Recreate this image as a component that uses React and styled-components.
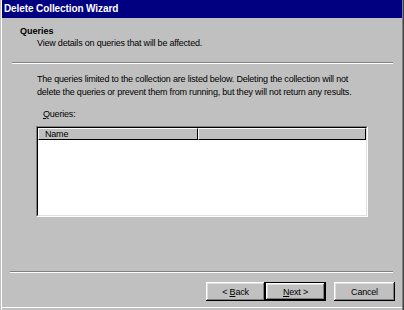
import styled, { createGlobalStyle } from "styled-components";

const GlobalStyle = createGlobalStyle`
  html, body {
    margin: 0;
    padding: 0;
    background: #c0c0c0;
  }
  body {
    font-family: "Liberation Sans", Arial, sans-serif;
    color: #000;
  }
`;

const Window = styled.div`
  width: 404px;
  height: 310px;
  box-sizing: border-box;
  padding: 0 2px 3px 2px;
  background: #c0c0c0;
  display: flex;
  flex-direction: column;
  box-shadow: inset 1px 0 0 #c0c0c0, inset 2px 0 0 #fff,
    inset -1px 0 0 #404040, inset -2px 0 0 #808080,
    inset 0 -2px 0 #c0c0c0, inset 0 -3px 0 #fff;
`;

const TitleBar = styled.div`
  height: 18px;
  background: #000080;
  color: #fff;
  font-weight: bold;
  font-size: 10px;
  letter-spacing: -0.1px;
  line-height: 18px;
  padding-left: 2px;
`;

const Header = styled.div`
  padding: 8px 0 0 18px;
  height: 36px;
  font-size: 9px;
`;

const HeaderTitle = styled.div`
  font-weight: bold;
  line-height: 11px;
`;

const HeaderSub = styled.div`
  line-height: 12px;
  padding-left: 17px;
  letter-spacing: -0.2px;
`;

const Separator = styled.div`
  height: 1px;
  margin: 0 9px 0 ${(p) => p.left || 10}px;
  background: #808080;
  border-bottom: 1px solid #fff;
`;

const Body = styled.div`
  flex: 1;
  padding: 9px 0 0 35px;
  font-size: 9px;
  letter-spacing: -0.2px;
`;

const Paragraph = styled.p`
  margin: 0;
  line-height: 13px;
`;

const Label = styled.div`
  margin: 9px 0 5px 6px;
  line-height: 13px;
`;

const Key = styled.span`
  text-decoration: underline;
`;

const ListBox = styled.div`
  margin-left: -1px;
  width: 332px;
  height: 91px;
  box-sizing: border-box;
  border: 1px solid;
  border-color: #808080 #fff #fff #808080;
`;

const ListInner = styled.div`
  height: 100%;
  box-sizing: border-box;
  border: 1px solid;
  border-color: #000 #dfdfdf #dfdfdf #000;
  background: #fff;
`;

const HeaderRow = styled.div`
  display: grid;
  grid-template-columns: 160px 1fr;
  height: 12px;
`;

const Column = styled.div`
  box-sizing: border-box;
  background: #c0c0c0;
  border-top: 1px solid #fff;
  border-left: 1px solid #fff;
  border-right: 1px solid #000;
  border-bottom: 1px solid #000;
  line-height: 10px;
  padding-left: 6px;
`;

const Footer = styled.div`
  display: flex;
  flex-direction: column;
`;

const Buttons = styled.div`
  display: flex;
  justify-content: flex-end;
  padding: 9px 7px 6px 0;
`;

const Button = styled.div`
  width: ${(p) => p.w}px;
  height: 19px;
  box-sizing: border-box;
  margin-left: ${(p) => p.gap || 0}px;
  display: flex;
  align-items: center;
  justify-content: center;
  font-size: 9px;
  letter-spacing: -0.2px;
  white-space: pre;
  background: #c0c0c0;
  border: ${(p) => (p.primary ? "1px solid #000" : "none")};
  box-shadow: inset -1px -1px 0 #000, inset 1px 1px 0 #fff,
    inset -2px -2px 0 #808080, inset 2px 2px 0 #dfdfdf;
`;

export default function App() {
  return (
    <>
      <GlobalStyle />
      <Window>
        <TitleBar>Delete Collection Wizard</TitleBar>
        <Header>
          <HeaderTitle>Queries</HeaderTitle>
          <HeaderSub>View details on queries that will be affected.</HeaderSub>
        </Header>
        <Separator />
        <Body>
          <Paragraph>
            The queries limited to the collection are listed below. Deleting the collection will not
            <br />
            delete the queries or prevent them from running, but they will not return any results.
          </Paragraph>
          <Label>
            <Key>Q</Key>ueries:
          </Label>
          <ListBox>
            <ListInner>
              <HeaderRow>
                <Column>Name</Column>
                <Column />
              </HeaderRow>
            </ListInner>
          </ListBox>
        </Body>
        <Footer>
          <Separator left={8} />
          <Buttons>
            <Button w={59}>
              <span>
                &lt; <Key>B</Key>ack
              </span>
            </Button>
            <Button w={61} primary>
              <span>
                <Key>N</Key>ext &gt;
              </span>
            </Button>
            <Button w={61} gap={8}>
              <span>Cancel</span>
            </Button>
          </Buttons>
        </Footer>
      </Window>
    </>
  );
}
